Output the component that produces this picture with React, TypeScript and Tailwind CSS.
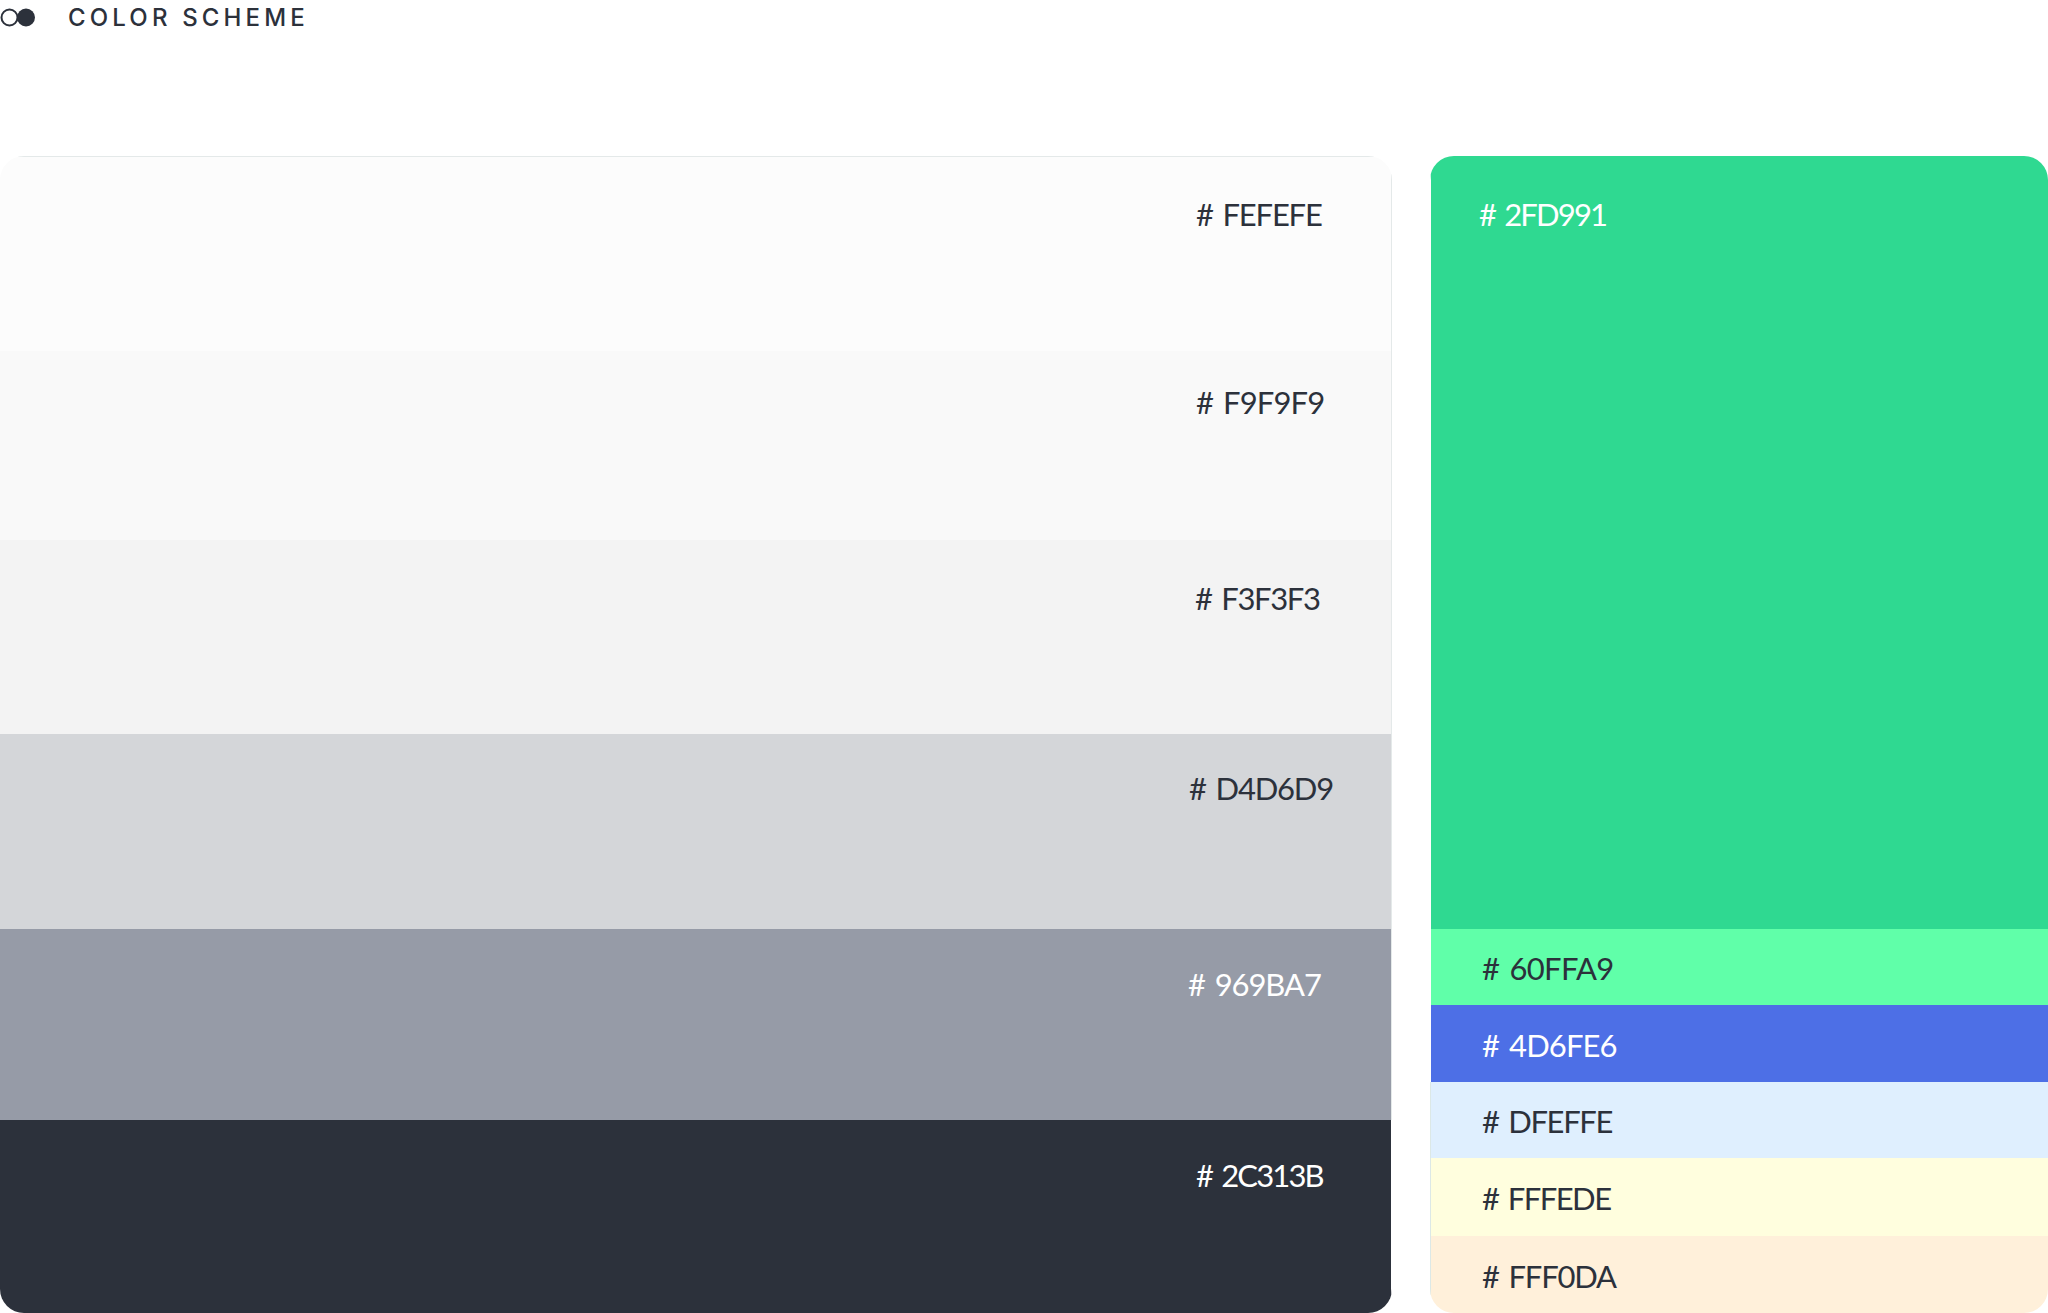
const neutrals = [
  { hex: "# FEFEFE", box: "h-[195px] border-t border-r border-[#E4E9E9] bg-[#FCFCFC] text-[#2C313B] pt-[37px] pl-[1196px] tracking-[-1.2px]" },
  { hex: "# F9F9F9", box: "h-[189px] border-r border-[#E4E9E9] bg-[#F9F9F9] text-[#2C313B] pt-[31px] pl-[1196px] tracking-[-0.9px]" },
  { hex: "# F3F3F3", box: "h-[194px] border-r border-[#E4E9E9] bg-[#F3F3F3] text-[#2C313B] pt-[38px] pl-[1195px] tracking-[-1.35px]" },
  { hex: "# D4D6D9", box: "h-[195px] border-r border-[#E4E9E9] bg-[#D4D6D9] text-[#2C313B] pt-[34px] pl-[1189px] tracking-[-1.2px]" },
  { hex: "# 969BA7", box: "h-[191px] border-r border-[#E4E9E9] bg-[#969BA7] text-white pt-[35px] pl-[1188px] tracking-[-1.1px]" },
  { hex: "# 2C313B", box: "flex-1 border-r border-white bg-[#2C313B] text-white pt-[35px] pl-[1196px] tracking-[-1.85px]" },
];

const accents = [
  { hex: "# 60FFA9", box: "h-[76px] border-white bg-[#60FFA9] text-[#2C313B] tracking-[-0.7px]" },
  { hex: "# 4D6FE6", box: "h-[77px] border-white bg-[#4D6FE6] text-white tracking-[-0.9px]" },
  { hex: "# DFEFFE", box: "h-[76px] border-[#DCE8E6] bg-[#DFEFFE] text-[#2C313B] tracking-[-1.35px]" },
  { hex: "# FFFEDE", box: "h-[78px] border-[#DCE8E6] bg-[#FFFEDE] text-[#2C313B] tracking-[-1.55px]" },
  { hex: "# FFF0DA", box: "flex-1 border-[#DCE8E6] bg-[#FFF0DA] text-[#2C313B] tracking-[-1.2px]" },
];

const hexText = "font-['Lato',sans-serif] text-[31px] leading-[40px] whitespace-nowrap [word-spacing:3px]";

const App = () => {
  return (
    <div className="h-[1313px] w-[2048px] overflow-hidden bg-white">
      <header className="flex h-[156px] items-start">
        <div className="flex h-[35px] items-center gap-[33px]">
          <svg width="35" height="19" viewBox="0 0 35 19" fill="none">
            <circle cx="9.5" cy="9.5" r="8" stroke="#2C313B" strokeWidth="2" />
            <circle cx="26" cy="9.5" r="9" fill="#2C313B" />
          </svg>
          <h2 className="font-['Inter',sans-serif] text-[24px] leading-[35px] font-medium tracking-[4.15px] text-[#2C313B]">
            COLOR SCHEME
          </h2>
        </div>
      </header>
      <div className="flex h-[1157px] gap-[38px]">
        <section className="flex w-[1392px] flex-col overflow-hidden rounded-[24px]">
          {neutrals.map((n) => (
            <div key={n.hex} className={n.box}>
              <p className={hexText}>{n.hex}</p>
            </div>
          ))}
        </section>
        <section className="flex flex-1 flex-col overflow-hidden rounded-[24px]">
          <div className="h-[773px] border-l border-white bg-[#2FD991] pt-[38px] pl-[48px] tracking-[-1.85px] text-white">
            <p className={hexText}>
              # 2FD991
            </p>
          </div>
          {accents.map((a) => (
            <div key={a.hex} className={`flex items-center border-l pl-[51px] ${a.box}`}>
              <p className={`${hexText} relative top-[1px]`}>{a.hex}</p>
            </div>
          ))}
        </section>
      </div>
    </div>
  );
};

export default App;
